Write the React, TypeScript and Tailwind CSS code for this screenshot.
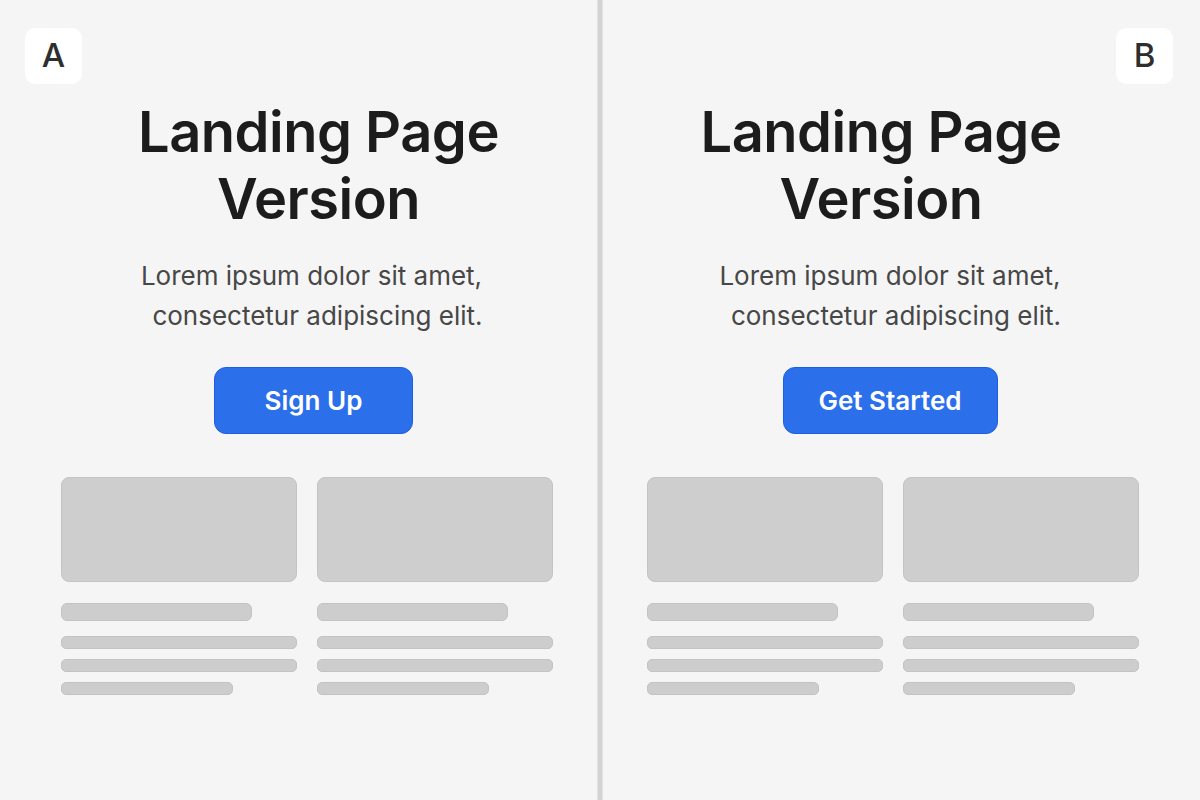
import type { ReactNode } from "react";

type Side = "left" | "right";

function Badge({ label }: { label: string }) {
  return (
    <div className="flex h-[56px] w-[57px] items-center justify-center rounded-[10px] bg-white text-[33px] font-medium text-[#2e2e2e]">
      {label}
    </div>
  );
}

function Bar({ className }: { className: string }) {
  return <div className={`border border-[#c3c3c3] bg-[#cdcdcd] ${className}`} />;
}

function PlaceholderCard() {
  return (
    <div className="flex flex-col">
      <div className="h-[105px] rounded-[8px] border border-[#c4c4c4] bg-[#cecece]" />
      <Bar className="mt-[21px] h-[18px] w-[81%] rounded-[6px]" />
      <div className="mt-[15px] flex flex-col gap-[10px]">
        <Bar className="h-[13px] w-full rounded-[5px]" />
        <Bar className="h-[13px] w-full rounded-[5px]" />
        <Bar className="h-[13px] w-[73%] rounded-[5px]" />
      </div>
    </div>
  );
}

function Panel({ side, badge, cta, ctaClass }: { side: Side; badge: string; cta: ReactNode; ctaClass: string }) {
  const left = side === "left";
  return (
    <section className="flex w-[597px] flex-col pt-[28px]">
      <div className={`flex ${left ? "justify-start pl-[25px]" : "justify-end pr-[27px]"}`}>
        <Badge label={badge} />
      </div>

      {/* hero */}
      <div className={`flex flex-col items-center ${left ? "pl-[26px]" : "pr-[23px]"}`}>
        <h1
          className={`mt-[15px] text-center text-[56px] font-semibold leading-[67px] tracking-[-0.5px] text-[#1c1c1c] ${
            left ? "pl-[14px]" : "pr-[18px]"
          }`}
        >
          Landing Page
          <br />
          Version
        </h1>
        <p className="mt-[23px] text-center text-[26px] leading-[40px] text-[#474747]">
          Lorem ipsum dolor sit amet,
          <br />
          <span className="pl-[12px]">consectetur adipiscing elit.</span>
        </p>
        <button
          className={`mt-[31px] h-[67px] ${ctaClass} rounded-[12px] border border-[#1c5fe2] bg-[#2c6fea] text-[26px] font-semibold text-white`}
        >
          {cta}
        </button>
      </div>

      {/* content placeholders */}
      <div className={`mt-[43px] grid grid-cols-2 gap-[20px] ${left ? "pl-[61px] pr-[44px]" : "pl-[44px] pr-[61px]"}`}>
        <PlaceholderCard />
        <PlaceholderCard />
      </div>
    </section>
  );
}

export default function App() {
  return (
    <div
      className="flex h-[800px] w-[1200px] overflow-hidden bg-[#f5f5f5]"
      style={{ fontFamily: "Inter, 'Noto Sans', sans-serif" }}
    >
      <Panel side="left" badge="A" cta="Sign Up" ctaClass="ml-[4px] w-[199px]" />
      <div className="w-[6px] border-x border-[#e2e2e2] bg-[#d4d4d4]" />
      <Panel side="right" badge="B" cta="Get Started" ctaClass="w-[215px]" />
    </div>
  );
}
